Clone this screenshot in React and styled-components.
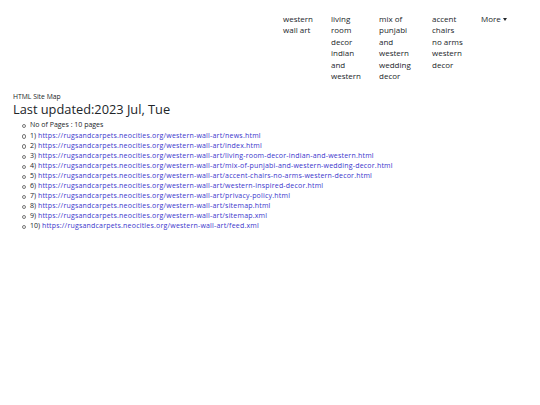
import styled, { createGlobalStyle } from 'styled-components';

const GlobalStyle = createGlobalStyle`
    body {
        margin: 0;
        background: #fff;
        color: #212529;
        font-family: "Open Sans", "Noto Sans", "Liberation Sans", sans-serif;
    }
`;

const Header = styled.header`
    display: flex;
    padding: 13px 0 0 283px;
`;

const NavItem = styled.div`
    box-sizing: border-box;
    width: ${(p) => p.$w}px;
    padding-right: ${(p) => p.$w - 33}px;
    font-size: 8px;
    line-height: 11.4px;
    color: #212529;
`;

const Caret = styled.span`
    display: inline-block;
    margin-left: 2px;
    vertical-align: 1px;
    border-top: 3px solid #212529;
    border-left: 2.5px solid transparent;
    border-right: 2.5px solid transparent;
`;

const Main = styled.main`
    padding: 11px 13px 0;
`;

const Small = styled.div`
    font-size: 6.8px;
    line-height: 9px;
`;

const Title = styled.h1`
    margin: 0 0 3px;
    font-size: 12.8px;
    font-weight: 400;
    line-height: 16px;
`;

const List = styled.ul`
    margin: 0;
    padding-left: 17px;
    list-style: none;
    font-size: 7px;
    line-height: 10.1px;
`;

const Item = styled.li`
    position: relative;

    &::before {
        content: '';
        position: absolute;
        left: -8px;
        top: 3.8px;
        width: 2.2px;
        height: 2.2px;
        border: 0.6px solid #777;
        border-radius: 50%;
    }
`;

const Link = styled.a`
    color: #3a35cc;
    text-decoration: none;
    letter-spacing: 0.2px;
`;

const nav = [
    { w: 48, t: 'western wall art' },
    { w: 48, t: 'living room decor indian and western' },
    { w: 53, t: 'mix of punjabi and western wedding decor' },
    { w: 49, t: 'accent chairs no arms western decor' },
];

const base = 'https://rugsandcarpets.neocities.org/western-wall-art/';
const pages = [
    'news.html',
    'index.html',
    'living-room-decor-indian-and-western.html',
    'mix-of-punjabi-and-western-wedding-decor.html',
    'accent-chairs-no-arms-western-decor.html',
    'western-inspired-decor.html',
    'privacy-policy.html',
    'sitemap.html',
    'sitemap.xml',
    'feed.xml',
];

export default function App() {
    return (
        <>
            <GlobalStyle />
            <Header>
                {nav.map((n) => (
                    <NavItem key={n.t} $w={n.w}>{n.t}</NavItem>
                ))}
                <NavItem $w={48}>More<Caret /></NavItem>
            </Header>
            <Main>
                <Small>HTML Site Map</Small>
                <Title>Last updated:2023 Jul, Tue</Title>
                <List>
                    <Item>No of Pages : 10 pages</Item>
                    {pages.map((p, i) => (
                        <Item key={p}>
                            {i + 1}) <Link href={base + p}>{base + p}</Link>
                        </Item>
                    ))}
                </List>
            </Main>
        </>
    );
}
